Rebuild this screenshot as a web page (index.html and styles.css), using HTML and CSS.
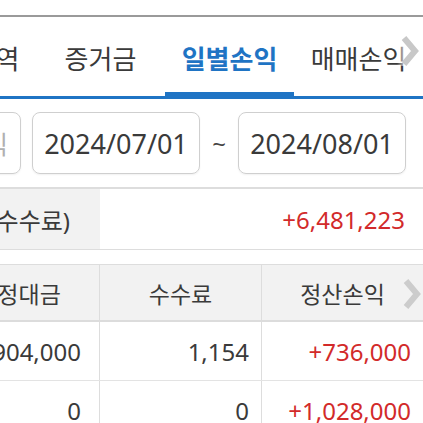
FILE: index.html
```html
<!DOCTYPE html>
<html lang="ko">
<head>
<meta charset="utf-8">
<link rel="stylesheet" href="styles.css">
</head>
<body>
<div class="page">
  <div class="topbar"></div>
  <div class="tabbar">
    <div class="tabs">
      <div class="tab">거래내역</div>
      <div class="tab">증거금</div>
      <div class="tab active">일별손익</div>
      <div class="tab">매매손익</div>
    </div>
    <div class="more more-tabs">
      <svg width="20" height="30" viewBox="0 0 20 30"><path d="M4 2 L15 15 L4 28" fill="none" stroke="#c8c8c8" stroke-width="6" stroke-linejoin="miter"/></svg>
    </div>
  </div>
  <div class="daterow">
    <div class="field ghost">일별손익</div>
    <div class="field">2024/07/01</div>
    <div class="tilde">~</div>
    <div class="field">2024/08/01</div>
  </div>
  <div class="summary">
    <div class="sum-label"><span>정산손익(수수료)</span></div>
    <div class="sum-value up">+6,481,223</div>
  </div>
  <div class="table">
    <div class="row head">
      <div class="cell">약정대금</div>
      <div class="cell">수수료</div>
      <div class="cell">정산손익</div>
      <div class="more more-head">
        <svg width="20" height="30" viewBox="0 0 20 30"><path d="M4 2 L15 15 L4 28" fill="none" stroke="#cccccc" stroke-width="6"/></svg>
      </div>
    </div>
    <div class="row">
      <div class="cell num c0">29,904,000</div>
      <div class="cell num">1,154</div>
      <div class="cell num up">+736,000</div>
    </div>
    <div class="row">
      <div class="cell num c0">0</div>
      <div class="cell num">0</div>
      <div class="cell num up">+1,028,000</div>
    </div>
  </div>
</div>
</body>
</html>
```
FILE: styles.css
```css
* { box-sizing: border-box; }
html, body { margin: 0; padding: 0; background: #fff; }
body {
  width: 423px;
  height: 423px;
  overflow: hidden;
  font-family: "Noto Sans", "Noto Sans CJK KR", sans-serif;
  color: #3a3a3a;
}
.page { width: 423px; overflow: hidden; }
.topbar {
  height: 17px;
  border-bottom: 2px solid #9a9a9a;
}
.tabbar {
  position: relative;
  height: 82px;
  border-bottom: 3px solid #1f74c4;
}
.tabs {
  display: flex;
  margin-left: -93px;
  height: 79px;
}
.tab {
  flex: 0 0 129px;
  display: flex;
  align-items: center;
  justify-content: center;
  font-size: 26px;
  color: #3a3a3a;
  white-space: nowrap;
  padding-top: 2px;
}
.tab.active {
  color: #1f74c4;
  font-weight: 700;
  border-bottom: 4px solid #1f74c4;
  padding-top: 6px;
}
.more {
  position: absolute;
  right: 0;
  display: flex;
  align-items: center;
  justify-content: flex-end;
  padding-right: 3px;
}
.more-tabs {
  top: 19px;
  height: 30px;
  width: 26px;
  background: linear-gradient(to right, rgba(255,255,255,0), #fff 40%);
}
.more-head {
  top: 14px;
  height: 30px;
  width: 24px;
  padding-right: 1px;
}
.daterow {
  display: flex;
  align-items: center;
  height: 90px;
  margin-left: -147px;
  border-bottom: 2px solid #dddddd;
}
.field {
  flex: 0 0 168px;
  height: 62px;
  border: 1px solid #cfcfcf;
  border-radius: 8px;
  display: flex;
  align-items: center;
  justify-content: center;
  font-size: 27px;
  color: #3a3a3a;
  box-shadow: 0 1px 2px rgba(0,0,0,0.06);
}
.field.ghost {
  justify-content: flex-end;
  padding-right: 12px;
  color: #b0b0b0;
  font-size: 25px;
  margin-right: 11px;
  overflow: hidden;
  white-space: nowrap;
}
.tilde {
  flex: 0 0 38px;
  text-align: center;
  font-size: 24px;
  color: #444;
}
.summary {
  display: flex;
  height: 61px;
  border-bottom: 1px solid #dddddd;
  margin-left: -61px;
}
.sum-label {
  flex: 0 0 161px;
  width: 161px;
  min-width: 0;
  overflow: hidden;
  background: #f2f2f2;
  display: flex;
  align-items: center;
  justify-content: flex-end;
  padding-right: 30px;
  font-size: 24px;
  white-space: nowrap;
}
.sum-label span { flex: none; }
.sum-value {
  flex: 1;
  display: flex;
  align-items: center;
  justify-content: flex-end;
  padding-right: 18px;
  font-size: 24px;
}
.up { color: #d22a2a; }
.table {
  margin-top: 14px;
  margin-left: -62px;
  border-top: 1px solid #dddddd;
}
.row {
  display: grid;
  grid-template-columns: 162px 162px 161px;
  height: 59px;
  border-bottom: 1px solid #e3e3e3;
  position: relative;
}
.row.head {
  height: 57px;
  background: #f2f2f2;
  border-bottom: 2px solid #dcdcdc;
}
.cell {
  display: flex;
  align-items: center;
  justify-content: center;
  font-size: 23px;
  border-right: 1px solid #dddddd;
  white-space: nowrap;
}
.cell:nth-child(3) { border-right: none; }
.cell.num {
  justify-content: flex-end;
  padding-right: 12px;
  font-size: 24px;
}
.cell.num.c0 { padding-right: 18px; }
```
